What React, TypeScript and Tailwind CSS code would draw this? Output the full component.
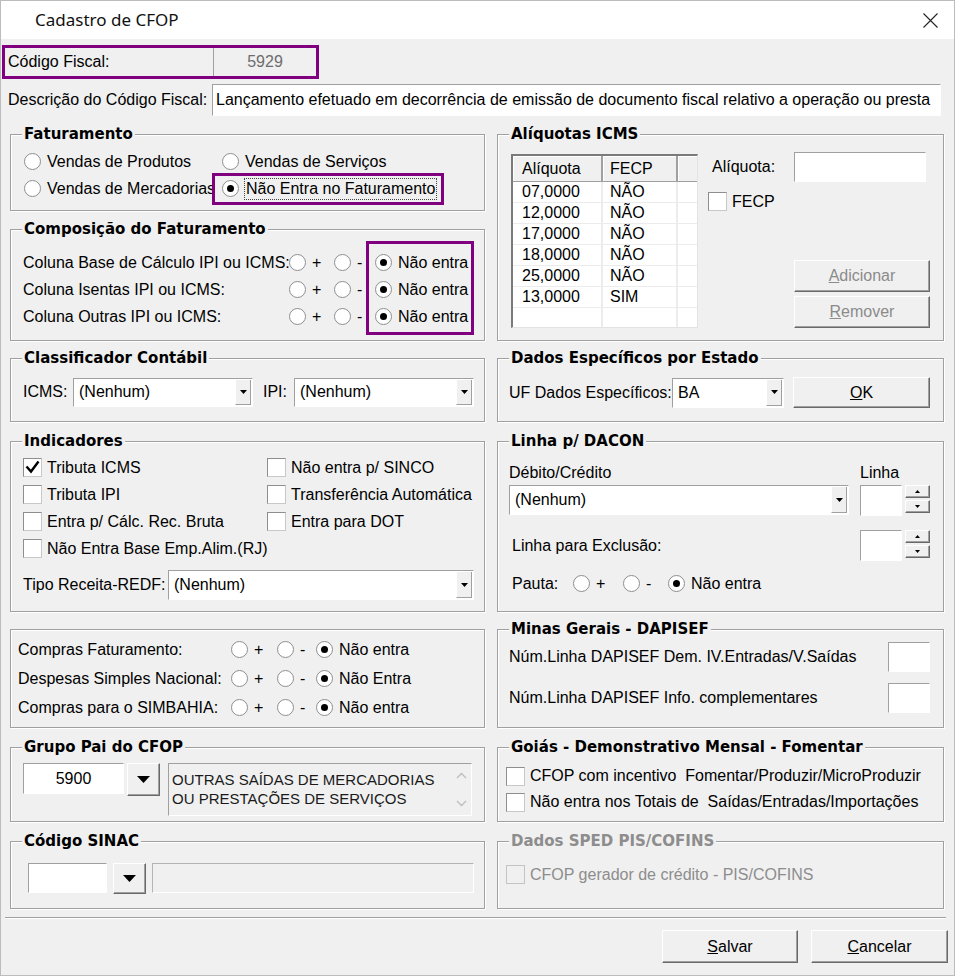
import React from 'react';

const Tri: React.FC<{ big?: boolean }> = ({ big }) =>
  big ? (
    <svg width="13" height="7" viewBox="0 0 13 7">
      <polygon points="0,0 13,0 6.5,7" fill="#000" />
    </svg>
  ) : (
    <svg width="7" height="4" viewBox="0 0 7 4">
      <polygon points="0,0 7,0 3.5,4" fill="#000" />
    </svg>
  );

const Group: React.FC<{ title?: string; className?: string; disabled?: boolean; children?: React.ReactNode }> = ({
  title,
  className,
  disabled,
  children,
}) => (
  <div className={`relative border border-[#a0a0a0] shadow-[inset_1px_1px_0_#ffffff,1px_1px_0_#ffffff] ${className ?? ''}`}>
    {title && (
      <span
        className={`absolute left-[11px] top-[-10px] px-[2px] bg-[#f0f0f0] font-['DejaVu_Sans',sans-serif] font-bold text-[15px] leading-[18px] whitespace-nowrap ${
          disabled ? 'text-[#8d8d8d]' : 'text-black'
        }`}
      >
        {title}
      </span>
    )}
    {children}
  </div>
);

const Radio: React.FC<{ checked?: boolean; label?: string; className?: string; focus?: boolean }> = ({
  checked,
  label,
  className,
  focus,
}) => (
  <div className={`flex items-center ${className ?? ''}`}>
    <span className="w-[17px] h-[17px] rounded-full border border-[#8e8e8e] bg-white flex items-center justify-center shrink-0">
      {checked && <span className="w-[7px] h-[7px] rounded-full bg-black" />}
    </span>
    {label &&
      (focus ? (
        <span className="ml-[5px] px-[1px] border border-dotted border-[#444] leading-[20px] whitespace-nowrap">{label}</span>
      ) : (
        <span className="ml-[6px] whitespace-nowrap">{label}</span>
      ))}
  </div>
);

const Check: React.FC<{ checked?: boolean; label: string; className?: string; disabled?: boolean }> = ({
  checked,
  label,
  className,
  disabled,
}) => (
  <div className={`flex items-center ${className ?? ''}`}>
    <span
      className={`w-[19px] h-[19px] border flex items-center justify-center shrink-0 ${
        disabled ? 'border-[#c4c4c4] bg-[#f0f0f0]' : 'border-[#8e8e8e] border-r-[#c8c8c8] border-b-[#c8c8c8] bg-white'
      }`}
    >
      {checked && (
        <svg width="17" height="17" viewBox="0 0 17 17">
          <path d="M2.5 7.5 L7 12.5 L14.5 2.5" stroke="#000" strokeWidth="2.4" fill="none" />
        </svg>
      )}
    </span>
    <span className={`ml-[5px] whitespace-nowrap ${disabled ? 'text-[#8d8d8d]' : ''}`}>{label}</span>
  </div>
);

const Combo: React.FC<{ value: string; className?: string }> = ({ value, className }) => (
  <div className={`flex bg-white border border-[#a0a0a0] border-r-white border-b-white ${className ?? ''}`}>
    <span className="flex-1 pl-[5px] flex items-center whitespace-nowrap overflow-hidden">{value}</span>
    <span className="w-[16px] my-[1px] mr-[1px] bg-[#f0f0f0] border-l border-l-white border-r border-b border-[#a0a0a0] flex items-center justify-center">
      <Tri />
    </span>
  </div>
);

const Edit: React.FC<{ className?: string; children?: React.ReactNode }> = ({ className, children }) => (
  <div className={`bg-white border border-[#a0a0a0] border-r-white border-b-white ${className ?? ''}`}>{children}</div>
);

const Btn: React.FC<{ className?: string; disabled?: boolean; children?: React.ReactNode }> = ({ className, disabled, children }) => (
  <div
    className={`flex items-center justify-center bg-[#f0f0f0] border border-t-white border-l-white border-r-[#696969] border-b-[#696969] shadow-[inset_-1px_-1px_0_#a0a0a0] ${
      disabled ? 'text-[#8b8b8b]' : 'text-black'
    } ${className ?? ''}`}
  >
    {children}
  </div>
);

const Spin: React.FC = () => (
  <div className="flex">
    <Edit className="w-[42px] h-[31px]" />
    <div className="ml-[3px] w-[25px] flex flex-col gap-[2px]">
      <Btn className="h-[13px]">
        <svg width="5" height="3" viewBox="0 0 5 3">
          <polygon points="0,3 5,3 2.5,0" fill="#000" />
        </svg>
      </Btn>
      <Btn className="h-[13px]">
        <svg width="5" height="3" viewBox="0 0 5 3">
          <polygon points="0,0 5,0 2.5,3" fill="#000" />
        </svg>
      </Btn>
    </div>
  </div>
);

const aliquotas = [
  ['07,0000', 'NÃO'],
  ['12,0000', 'NÃO'],
  ['17,0000', 'NÃO'],
  ['18,0000', 'NÃO'],
  ['25,0000', 'NÃO'],
  ['13,0000', 'SIM'],
  ['', ''],
];

const triRows = ['Coluna Base de Cálculo IPI ou ICMS:', 'Coluna Isentas IPI ou ICMS:', 'Coluna Outras IPI ou ICMS:'];

const compras = [
  ['Compras Faturamento:', 'Não entra'],
  ['Despesas Simples Nacional:', 'Não Entra'],
  ['Compras para o SIMBAHIA:', 'Não entra'],
];

export default function App() {
  return (
    <div className="w-[955px] h-[976px] overflow-hidden bg-[#f0f0f0] border border-[#bcbcbc] font-['Liberation_Sans',Arial,sans-serif] text-[16px] leading-[18px] text-black">
      {/* title bar */}
      <div className="h-[38px] bg-white flex items-center justify-between pl-[34px] pr-[16px]">
        <span className="font-['Noto_Sans',sans-serif] text-[17px] text-[#111]">Cadastro de CFOP</span>
        <svg width="15" height="15" viewBox="0 0 15 15">
          <path d="M0.5 0.5 L14.5 14.5 M14.5 0.5 L0.5 14.5" stroke="#222" strokeWidth="1.1" />
        </svg>
      </div>

      {/* código fiscal */}
      <div className="mt-[6px] ml-[1px] w-[317px] h-[34px] border-[3px] border-[#800080] flex">
        <span className="w-[208px] pl-[3px] flex items-center">Código Fiscal:</span>
        <span className="flex-1 border-l border-[#a0a0a0] flex items-center justify-center text-[#6d6d6d]">5929</span>
      </div>

      <div className="mt-[5px] h-[32px] flex items-center">
        <span className="ml-[7px] w-[204px] whitespace-nowrap">Descrição do Código Fiscal:</span>
        <Edit className="w-[729px] h-[32px] pl-[3px] flex items-center whitespace-nowrap overflow-hidden">
          Lançamento efetuado em decorrência de emissão de documento fiscal relativo a operação ou presta
        </Edit>
      </div>

      <div className="mt-[18px] pl-[9px] flex flex-col">
        {/* row A */}
        <div className="flex gap-[12px]">
          <div className="w-[475px] flex flex-col">
            <Group title="Faturamento" className="h-[77px] pt-[13px] pl-[13px]">
              <div className="flex h-[27px] items-center">
                <Radio label="Vendas de Produtos" className="w-[198px]" />
                <Radio label="Vendas de Serviços" />
              </div>
              <div className="flex h-[27px] items-center">
                <Radio label="Vendas de Mercadorias" className="w-[198px]" />
                <div className="ml-[-7px] pl-[7px] pr-[4px] h-[26px] flex items-center outline-[3px] outline-[#800080]">
                  <Radio checked focus label="Não Entra no Faturamento" />
                </div>
              </div>
            </Group>

            <Group title="Composição do Faturamento" className="mt-[18px] h-[112px] pt-[19px] pl-[12px] flex">
              <div className="w-[266px] flex flex-col">
                {triRows.map((r) => (
                  <div key={r} className="h-[27px] flex items-center whitespace-nowrap">
                    {r}
                  </div>
                ))}
              </div>
              <div className="w-[45px] flex flex-col">
                {triRows.map((r) => (
                  <Radio key={r} label="+" className="h-[27px]" />
                ))}
              </div>
              <div className="w-[41px] flex flex-col">
                {triRows.map((r) => (
                  <Radio key={r} label="-" className="h-[27px]" />
                ))}
              </div>
              <div className="self-start ml-[-6px] pl-[6px] pr-[3px] mt-[-5px] pt-[5px] pb-[2px] flex flex-col outline-[3px] outline-[#800080]">
                {triRows.map((r) => (
                  <Radio key={r} checked label="Não entra" className="h-[27px]" />
                ))}
              </div>
            </Group>
          </div>

          <Group title="Alíquotas ICMS" className="w-[447px] h-[207px] pt-[17px] pl-[13px] flex">
            <div className="mt-[2px] w-[187px] h-[174px] overflow-hidden bg-white border-t-2 border-l-2 border-[#7a7a7a] border-r border-b border-r-[#e3e3e3] border-b-[#e3e3e3]">
              <div className="h-[26px] flex bg-[#f0f0f0] border-b border-[#a0a0a0]">
                <span className="w-[90px] pl-[9px] flex items-center border-r-2 border-[#a0a0a0] shadow-[inset_1px_1px_0_#ffffff]">Alíquota</span>
                <span className="w-[75px] pl-[7px] flex items-center border-r-2 border-[#a0a0a0] shadow-[inset_1px_1px_0_#ffffff]">FECP</span>
                <span className="flex-1 shadow-[inset_1px_1px_0_#ffffff]" />
              </div>
              {aliquotas.map(([a, f], i) => (
                <div key={i} className="h-[21px] flex border-b border-[#ececec]">
                  <span className="w-[90px] pl-[9px] flex items-center border-r-2 border-[#ececec]">{a}</span>
                  <span className="w-[75px] pl-[7px] flex items-center border-r-2 border-[#ececec]">{f}</span>
                  <span className="flex-1" />
                </div>
              ))}
            </div>
            <div className="ml-[10px] w-[222px] flex flex-col">
              <div className="h-[30px] flex items-center">
                <span className="ml-[4px]">Alíquota:</span>
                <Edit className="ml-auto mr-[4px] w-[132px] h-[30px]" />
              </div>
              <Check label="FECP" className="mt-[10px] h-[19px]" />
              <Btn disabled className="mt-[49px] self-end w-[136px] h-[32px]">
                <span>
                  <span className="underline">A</span>dicionar
                </span>
              </Btn>
              <Btn disabled className="mt-[4px] self-end w-[136px] h-[32px]">
                <span>
                  <span className="underline">R</span>emover
                </span>
              </Btn>
            </div>
          </Group>
        </div>

        {/* row B */}
        <div className="mt-[17px] flex gap-[12px]">
          <Group title="Classificador Contábil" className="w-[475px] h-[64px] pt-[18px] pl-[12px]">
            <div className="h-[30px] flex items-center">
              <span className="w-[50px]">ICMS:</span>
              <Combo value="(Nenhum)" className="w-[180px] h-[29px]" />
              <span className="ml-[10px] w-[31px]">IPI:</span>
              <Combo value="(Nenhum)" className="w-[180px] h-[29px]" />
            </div>
          </Group>
          <Group title="Dados Específicos por Estado" className="w-[447px] h-[64px] pt-[18px] pl-[11px]">
            <div className="h-[31px] flex items-center">
              <span className="w-[163px] whitespace-nowrap">UF Dados Específicos:</span>
              <Combo value="BA" className="w-[112px] h-[30px]" />
              <Btn className="ml-[9px] w-[137px] h-[31px]">
                <span>
                  <span className="underline">O</span>K
                </span>
              </Btn>
            </div>
          </Group>
        </div>

        {/* row C */}
        <div className="mt-[19px] flex gap-[12px]">
          <Group title="Indicadores" className="w-[475px] h-[171px] pt-[12px] pl-[12px]">
            <div className="flex h-[27px] items-center">
              <Check checked label="Tributa ICMS" className="w-[244px]" />
              <Check label="Não entra p/ SINCO" />
            </div>
            <div className="flex h-[27px] items-center">
              <Check label="Tributa IPI" className="w-[244px]" />
              <Check label="Transferência Automática" />
            </div>
            <div className="flex h-[27px] items-center">
              <Check label="Entra p/ Cálc. Rec. Bruta" className="w-[244px]" />
              <Check label="Entra para DOT" />
            </div>
            <div className="flex h-[27px] items-center">
              <Check label="Não Entra Base Emp.Alim.(RJ)" />
            </div>
            <div className="mt-[8px] flex items-center">
              <span className="w-[145px] whitespace-nowrap">Tipo Receita-REDF:</span>
              <Combo value="(Nenhum)" className="w-[306px] h-[30px]" />
            </div>
          </Group>

          <Group title="Linha p/ DACON" className="w-[447px] h-[171px] pt-[22px] pl-[11px]">
            <div className="flex">
              <span className="w-[351px]">Débito/Crédito</span>
              <span>Linha</span>
            </div>
            <div className="mt-[3px] flex">
              <Combo value="(Nenhum)" className="w-[340px] h-[30px]" />
              <div className="ml-[11px]">
                <Spin />
              </div>
            </div>
            <div className="mt-[14px] h-[31px] flex items-center">
              <span className="ml-[3px] w-[348px]">Linha para Exclusão:</span>
              <Spin />
            </div>
            <div className="mt-[9px] h-[27px] flex items-center">
              <span className="ml-[3px] w-[61px]">Pauta:</span>
              <Radio label="+" className="w-[50px]" />
              <Radio label="-" className="w-[45px]" />
              <Radio checked label="Não entra" />
            </div>
          </Group>
        </div>

        {/* row D */}
        <div className="mt-[17px] flex gap-[12px]">
          <Group className="w-[475px] h-[99px] pt-[5px] pl-[7px]">
            {compras.map(([l, n]) => (
              <div key={l} className="h-[29px] flex items-center">
                <span className="w-[213px] whitespace-nowrap">{l}</span>
                <Radio label="+" className="w-[46px]" />
                <Radio label="-" className="w-[39px]" />
                <Radio checked label={n} />
              </div>
            ))}
          </Group>
          <Group title="Minas Gerais - DAPISEF" className="w-[447px] h-[99px] pt-[12px] pl-[11px] pr-[13px]">
            <div className="h-[30px] flex items-center justify-between">
              <span>Núm.Linha DAPISEF Dem. IV.Entradas/V.Saídas</span>
              <Edit className="w-[42px] h-[30px]" />
            </div>
            <div className="mt-[11px] h-[30px] flex items-center justify-between">
              <span>Núm.Linha DAPISEF Info. complementares</span>
              <Edit className="w-[42px] h-[30px]" />
            </div>
          </Group>
        </div>

        {/* row E */}
        <div className="mt-[19px] flex gap-[12px]">
          <Group title="Grupo Pai do CFOP" className="w-[475px] h-[75px] pt-[15px] pl-[12px] flex items-start">
            <Edit className="w-[101px] h-[31px] flex items-center justify-center">5900</Edit>
            <Btn className="ml-[3px] w-[33px] h-[33px]">
              <Tri big />
            </Btn>
            <div className="ml-[8px] w-[304px] h-[53px] flex bg-[#f0f0f0] border border-[#a0a0a0] border-r-white border-b-white text-[15px] leading-[19px]">
              <div className="flex-1 pl-[3px] pt-[6px] text-[#1a1a1a]">
                <div>OUTRAS SAÍDAS DE MERCADORIAS</div>
                <div>OU PRESTAÇÕES DE SERVIÇOS</div>
              </div>
              <div className="w-[20px] flex flex-col items-center justify-between py-[8px]">
                <svg width="11" height="7" viewBox="0 0 11 7">
                  <path d="M1 6 L5.5 1.5 L10 6" stroke="#bdbdbd" strokeWidth="1.3" fill="none" />
                </svg>
                <svg width="11" height="7" viewBox="0 0 11 7">
                  <path d="M1 1 L5.5 5.5 L10 1" stroke="#bdbdbd" strokeWidth="1.3" fill="none" />
                </svg>
              </div>
            </div>
          </Group>
          <Group title="Goiás - Demonstrativo Mensal - Fomentar" className="w-[447px] h-[75px] pt-[15px] pl-[8px]">
            <Check label={'CFOP com incentivo\u00a0 Fomentar/Produzir/MicroProduzir'} className="h-[26px]" />
            <Check label={'Não entra nos Totais de\u00a0 Saídas/Entradas/Importações'} className="h-[26px]" />
          </Group>
        </div>

        {/* row F */}
        <div className="mt-[19px] flex gap-[12px]">
          <Group title="Código SINAC" className="w-[475px] h-[68px] pt-[21px] pl-[17px] flex items-start">
            <Edit className="w-[79px] h-[30px]" />
            <Btn className="ml-[6px] w-[33px] h-[31px]">
              <Tri big />
            </Btn>
            <div className="ml-[6px] w-[322px] h-[30px] bg-[#f0f0f0] border border-[#b4b4b4] border-r-white border-b-white" />
          </Group>
          <Group title="Dados SPED PIS/COFINS" disabled className="w-[447px] h-[68px] pt-[19px] pl-[8px]">
            <Check disabled label="CFOP gerador de crédito - PIS/COFINS" className="h-[27px]" />
          </Group>
        </div>
      </div>

      <div className="mt-[8px] ml-[4px] w-[941px] h-[2px] border-t border-[#a0a0a0] border-b border-b-white" />

      <div className="mt-[11px] pr-[6px] flex justify-end gap-[13px]">
        <Btn className="w-[136px] h-[33px]">
          <span>
            <span className="underline">S</span>alvar
          </span>
        </Btn>
        <Btn className="w-[137px] h-[33px]">
          <span>
            <span className="underline">C</span>ancelar
          </span>
        </Btn>
      </div>
    </div>
  );
}
